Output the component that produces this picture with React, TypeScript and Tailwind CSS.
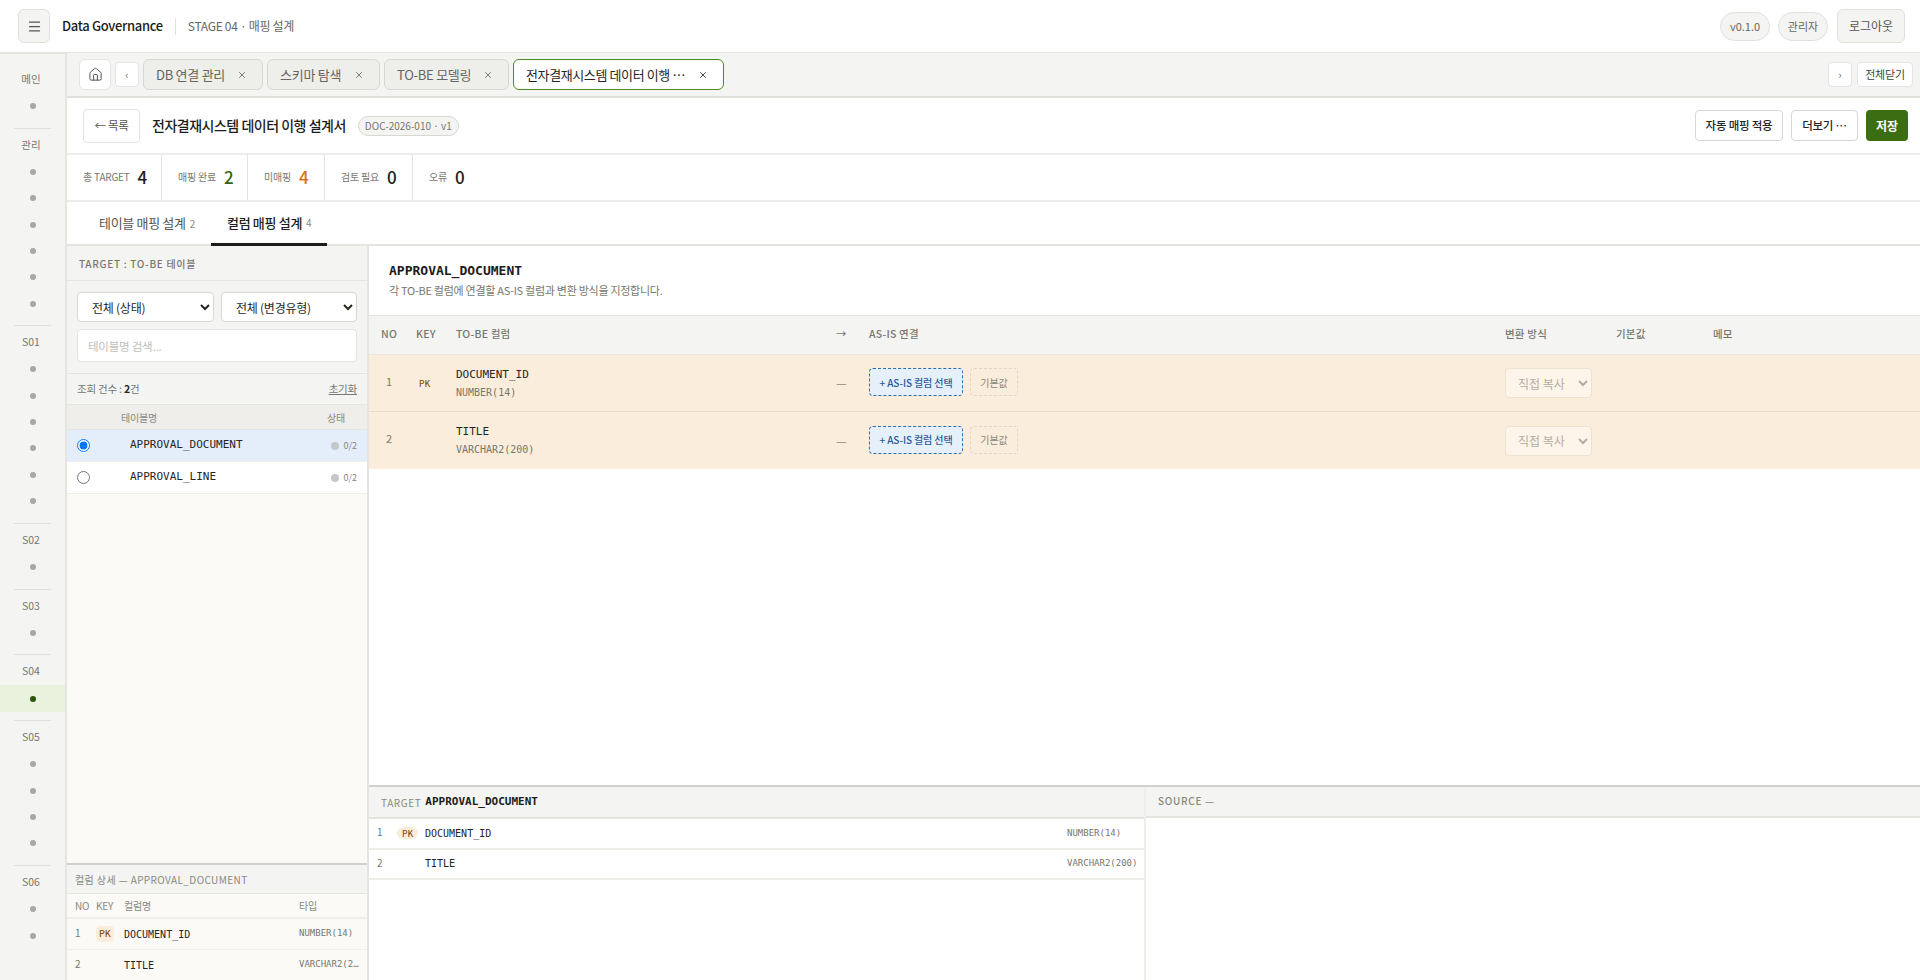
import { Home, Menu, X } from "lucide-react";

const sans = "font-['Noto_Sans_CJK_KR','Noto_Sans',sans-serif]";
const mono = "font-['DejaVu_Sans_Mono','Noto_Sans_CJK_KR',monospace]";

const navGroups = [
  { label: "메인", count: 1 },
  { label: "관리", count: 6 },
  { label: "S01", count: 6 },
  { label: "S02", count: 1 },
  { label: "S03", count: 1 },
  { label: "S04", count: 1, active: true },
  { label: "S05", count: 4 },
  { label: "S06", count: 2 },
];

const tabs = [
  { label: "DB 연결 관리", width: "w-[120px]" },
  { label: "스키마 탐색", width: "w-[113px]" },
  { label: "TO-BE 모델링", width: "w-[125px]" },
];

const kpis = [
  { label: "총 TARGET", value: "4", color: "text-[#1c1c1a]", width: "w-[95px]" },
  { label: "매핑 완료", value: "2", color: "text-[#33640f]", width: "w-[86px]" },
  { label: "미매핑", value: "4", color: "text-[#d9750f]", width: "w-[77px]" },
  { label: "검토 필요", value: "0", color: "text-[#1c1c1a]", width: "w-[88px]" },
  { label: "오류", value: "0", color: "text-[#1c1c1a]", width: "" },
];

const columns = [
  { no: 1, key: "PK", name: "DOCUMENT_ID", type: "NUMBER(14)" },
  { no: 2, key: "", name: "TITLE", type: "VARCHAR2(200)" },
];

function Sidebar() {
  return (
    <aside className="flex w-[67px] shrink-0 flex-col border-r-2 border-[#e4e4e0] bg-[#f4f4f2] pt-[9px]">
      {navGroups.map((group, i) => (
        <div key={group.label} className={i === 0 ? "pt-2" : "mt-[8.6px] pt-2"}>
          {i > 0 && <div className="mx-3.5 -mt-2 mb-2 h-px bg-[#e0e0dc]" />}
          <div className="mb-1.5 h-4 pr-[3px] text-center text-[10.5px] leading-4 text-[#77776f]">{group.label}</div>
          {Array.from({ length: group.count }).map((_, n) => (
            <div key={n} className={`flex h-[26.3px] items-center justify-center pl-[1px] ${group.active ? "bg-[#e8f2dc]" : ""}`}>
              <span className={`h-[6px] w-[6px] rounded-full ${group.active ? "bg-[#2b540b]" : "bg-[#a8a8a4]"}`} />
            </div>
          ))}
        </div>
      ))}
    </aside>
  );
}

function TabBar() {
  return (
    <div className="flex h-[45px] shrink-0 items-center border-b-2 border-[#e0e0dc] bg-[#f4f4f2] pl-3 pr-[7px]">
      <button className="flex h-[31px] w-[32px] items-center justify-center rounded-md border border-[#e4e4e0] bg-white text-[#55554f]">
        <Home size={15} strokeWidth={1.6} />
      </button>
      <button className="ml-1 mr-1 flex h-[25px] w-[24px] items-center justify-center rounded border border-[#e4e4e0] bg-white text-[11px] text-[#66665f]">‹</button>
      <div className="flex gap-1">
        {tabs.map((tab) => (
          <div key={tab.label} className={`flex h-[31px] items-center justify-between rounded-md border border-[#d8d8d2] bg-[#eeeeea] pl-3 pr-3 text-[13px] tracking-[-0.02em] text-[#66665f] ${tab.width}`}>
            <span>{tab.label}</span>
            <X size={10} className="mr-[3px]" />
          </div>
        ))}
        <div className="flex h-[31px] w-[211px] items-center justify-between rounded-md border border-[#4f8a1f] bg-white pl-3 pr-3 text-[13px] tracking-[-0.03em] text-[#26261f]">
          <span className="truncate">전자결재시스템 데이터 이행 ⋯</span>
          <X size={10} className="mr-[3px] shrink-0" />
        </div>
      </div>
      <div className="ml-auto flex items-center gap-[5px]">
        <button className="flex h-[25px] w-[24px] items-center justify-center rounded border border-[#e4e4e0] bg-white text-[11px] text-[#66665f]">›</button>
        <button className="h-[25px] w-[56px] rounded border border-[#e4e4e0] bg-white text-[11px] tracking-[-0.02em] text-[#44443e]">전체닫기</button>
      </div>
    </div>
  );
}

function DocHeader() {
  return (
    <div className="flex h-[57px] shrink-0 items-center border-b-2 border-[#ececea] bg-white pl-4 pr-3">
      <button className="h-[34px] w-[57px] rounded border border-[#e4e4e0] bg-white text-[11.5px] tracking-[-0.03em] text-[#55554f]">← 목록</button>
      <h1 className="ml-3 text-[14px] font-medium tracking-[-0.035em] text-[#1c1c1a]">전자결재시스템 데이터 이행 설계서</h1>
      <span className="ml-3 flex h-[20px] w-[101px] items-center justify-center rounded-full border border-[#d8d8d2] bg-[#f4f4f2] text-[10px] text-[#77776f]">DOC-2026-010 · v1</span>
      <div className="ml-auto flex gap-2">
        <button className="h-[31px] w-[88px] rounded border border-[#d8d8d2] bg-white text-[11.5px] font-medium tracking-[-0.02em] text-[#26261f]">자동 매핑 적용</button>
        <button className="h-[31px] w-[67px] rounded border border-[#d8d8d2] bg-white text-[11.5px] font-medium tracking-[-0.02em] text-[#26261f]">더보기 ⋯</button>
        <button className="h-[31px] w-[42px] rounded bg-[#3b6d11] text-[12px] font-semibold text-white">저장</button>
      </div>
    </div>
  );
}

function KpiRow() {
  return (
    <div className="flex h-[47px] shrink-0 border-b-2 border-[#ececea] bg-white">
      {kpis.map((kpi) => (
        <div key={kpi.label} className={`flex items-center gap-2 border-r border-[#e4e4e0] pl-4 last:border-r-0 ${kpi.width}`}>
          <span className="-mt-[2px] text-[10px] tracking-[-0.02em] text-[#77776f]">{kpi.label}</span>
          <span className={`-mt-[2px] text-[17px] font-medium ${kpi.color}`}>{kpi.value}</span>
        </div>
      ))}
    </div>
  );
}

function PageTabs() {
  return (
    <div className="flex h-[44px] shrink-0 border-b-2 border-[#e4e4e0] bg-white pl-[16px]">
      <div className="flex w-[128px] items-center pl-4 text-[13px] tracking-[-0.025em] text-[#55554f]">
        테이블 매핑 설계<span className="ml-1 text-[10px] text-[#88887f]">2</span>
      </div>
      <div className="-mb-[2px] flex w-[116px] items-center border-b-[3px] border-[#1c1c1a] pl-4 text-[13px] font-medium tracking-[-0.025em] text-[#1c1c1a]">
        컬럼 매핑 설계<span className="ml-1 text-[10px] font-normal text-[#88887f]">4</span>
      </div>
    </div>
  );
}

function TablePanel() {
  return (
    <div className="flex w-[302px] shrink-0 flex-col border-r-2 border-[#e4e4e0] bg-[#fbfaf7]">
      <div className="flex h-[35px] shrink-0 items-center border-b border-[#e4e4e0] bg-[#f4f4f2] pl-3 text-[10px] font-medium tracking-[0.07em] text-[#77776f]">
        TARGET : TO-BE 테이블
      </div>
      <div className="flex shrink-0 flex-col gap-[7px] border-b border-[#e4e4e0] bg-[#f4f4f2] px-[10px] py-[11px]">
        <div className="flex gap-[7px]">
          <select className="h-[30px] w-[137px] rounded border border-[#d8d8d2] bg-white pl-2.5 text-[12px] tracking-[-0.02em] text-[#26261f]">
            <option>전체 (상태)</option>
          </select>
          <select className="h-[30px] w-[136px] rounded border border-[#d8d8d2] bg-white pl-2.5 text-[12px] tracking-[-0.02em] text-[#26261f]">
            <option>전체 (변경유형)</option>
          </select>
        </div>
        <input placeholder="테이블명 검색..." className="h-[33px] w-full rounded border border-[#e4e4e0] bg-white px-2.5 text-[11.5px] tracking-[-0.02em] placeholder:text-[#c0c0ba]" />
      </div>
      <div className="flex h-[30px] shrink-0 items-center justify-between bg-[#f4f4f2] px-[10px] text-[10.5px] tracking-[-0.02em] text-[#77776f]">
        <span>
          조회 건수 : <b className="font-semibold text-[#26261f]">2</b>건
        </span>
        <span className="underline">초기화</span>
      </div>
      <div className="flex h-[26px] shrink-0 items-center border-y border-[#e4e4e0] bg-[#efeeea] text-[10px] tracking-[-0.02em] text-[#88887f]">
        <span className="ml-[54px]">테이블명</span>
        <span className="ml-auto mr-[22px]">상태</span>
      </div>
      {["APPROVAL_DOCUMENT", "APPROVAL_LINE"].map((name, i) => (
        <label key={name} className={`flex h-[32px] shrink-0 items-center border-b border-[#eeeeea] pl-[10px] pr-[10px] ${i === 0 ? "bg-[#e4eefa]" : "bg-white"}`}>
          <input type="radio" name="target-table" defaultChecked={i === 0} className="m-0 h-[13px] w-[13px]" />
          <span className={`ml-[40px] text-[11px] text-[#26261f] ${mono}`}>{name}</span>
          <span className="ml-auto flex items-center gap-1 text-[9px] text-[#88887f]">
            <span className="h-2 w-2 rounded-full bg-[#c4c8cc]" />0/2
          </span>
        </label>
      ))}
      <div className="mt-auto h-[117px] shrink-0 overflow-hidden border-t-2 border-[#d0d0cc] bg-[#fbfaf7]">
        <div className="flex h-[29px] items-center border-b border-[#e4e4e0] bg-[#f4f4f2] pl-2 text-[10px] tracking-[0.04em] text-[#88887f]">
          컬럼 상세 — APPROVAL_DOCUMENT
        </div>
        <div className="grid h-[25px] grid-cols-[21px_28px_175px_1fr] items-center border-b-2 border-[#eeeeea] pl-2 text-[10px] tracking-[-0.02em] text-[#88887f]">
          <span>NO</span>
          <span>KEY</span>
          <span>컬럼명</span>
          <span>타입</span>
        </div>
        {columns.map((col) => (
          <div key={col.no} className="grid h-[31px] grid-cols-[21px_28px_175px_1fr] items-center border-b border-[#eeeeea] pl-2 text-[#77776f]">
            <span className="-mt-[3px] text-[10px]">{col.no}</span>
            <span className="flex items-center">
              {col.key && <span className="rounded bg-[#faeddb] px-[3px] text-[9px] font-medium leading-[16px] text-[#8a4f10]">{col.key}</span>}
            </span>
            <span className={`text-[10px] text-[#26261f] ${mono}`}>{col.name}</span>
            <span className={`truncate pr-1 text-[9px] ${mono}`}>{col.type}</span>
          </div>
        ))}
      </div>
    </div>
  );
}

const colGrid = "grid grid-cols-[35px_40px_380px_33px_636px_111px_97px_1fr] items-center pl-3";

function MappingTable() {
  return (
    <div className="min-h-0 flex-1 bg-white">
      <div className="flex h-[69px] flex-col justify-center pb-[2px] pl-5">
        <div className={`text-[13px] font-bold text-[#1c1c1a] ${mono}`}>APPROVAL_DOCUMENT</div>
        <div className="mt-[1px] text-[11px] tracking-[-0.025em] text-[#77776f]">각 TO-BE 컬럼에 연결할 AS-IS 컬럼과 변환 방식을 지정합니다.</div>
      </div>
      <div className={`${colGrid} h-[40px] border-y border-[#e4e4e0] bg-[#f4f4f2] text-[10.5px] font-medium tracking-[0.02em] text-[#77776f]`}>
        <span className="-mt-[3px]">NO</span>
        <span className="-mt-[3px]">KEY</span>
        <span className="-mt-[3px]">TO-BE 컬럼</span>
        <span className="-mt-[3px]">→</span>
        <span className="-mt-[3px]">AS-IS 연결</span>
        <span className="-mt-[3px]">변환 방식</span>
        <span className="-mt-[3px]">기본값</span>
        <span className="-mt-[3px]">메모</span>
      </div>
      {columns.map((col) => (
        <div key={col.no} className={`${colGrid} h-[57px] border-b border-[#e8dcca] bg-[#faeddb] last:border-b-0`}>
          <span className="-mt-[4px] pl-[5px] text-[11px] text-[#77776f]">{col.no}</span>
          <span className="pl-[3px] text-[8.5px] font-medium text-[#8a4f10]">{col.key}</span>
          <div className="pt-[1px]">
            <div className={`text-[11px] leading-[18px] text-[#26261f] ${mono}`}>{col.name}</div>
            <div className={`text-[10px] leading-[18px] text-[#77776f] ${mono}`}>{col.type}</div>
          </div>
          <span className="text-[12px] text-[#88887f]">—</span>
          <div className="-mt-[2px] flex gap-[7px]">
            <button className="h-[28px] w-[94px] rounded border border-dashed border-[#2f6cb0] bg-[#e5f0fb] text-[10px] font-medium tracking-[-0.01em] text-[#1f5a9c]">+ AS-IS 컬럼 선택</button>
            <button className="h-[28px] w-[48px] rounded border border-dashed border-[#e0d6c6] text-[10px] text-[#88887f]">기본값</button>
          </div>
          <select disabled className="h-[30px] w-[87px] rounded border border-[#ece2d2] bg-[#fdf5ea] pl-2 text-[12px] text-[#b5ada2] opacity-100">
            <option>직접 복사</option>
          </select>
          <span />
          <span />
        </div>
      ))}
    </div>
  );
}

function CompareFooter() {
  return (
    <div className="flex h-[195px] shrink-0 border-t-2 border-[#d0d0cc] bg-white">
      <div className="w-[777px] shrink-0 border-r-2 border-[#eeeeea]">
        <div className="flex h-[32px] items-center gap-1 border-b-2 border-[#e4e4e0] bg-[#f4f4f2] pl-3 text-[10px] tracking-[0.06em] text-[#88887f]">
          TARGET <b className={`text-[11px] font-bold tracking-normal text-[#1c1c1a] ${mono}`}>APPROVAL_DOCUMENT</b>
        </div>
        {columns.map((col) => (
          <div key={col.no} className="flex h-[30.5px] items-center border-b-2 border-[#eeeeea] pl-2 text-[#77776f]">
            <span className="-mt-[3px] w-[20px] text-[10px]">{col.no}</span>
            <span className="flex w-[28px] items-center">
              {col.key && <span className="rounded-full bg-[#faeddb] px-[5px] text-[8.5px] font-medium leading-[12px] text-[#8a4f10]">{col.key}</span>}
            </span>
            <span className={`text-[10px] text-[#26261f] ${mono}`}>{col.name}</span>
            <span className={`ml-auto w-[77px] text-[9px] ${mono}`}>{col.type}</span>
          </div>
        ))}
      </div>
      <div className="flex-1">
        <div className="flex h-[31px] items-center border-b-2 border-[#e4e4e0] bg-[#f4f4f2] pb-[2px] pl-3 text-[10px] font-medium tracking-[0.07em] text-[#88887f]">
          SOURCE —
        </div>
      </div>
    </div>
  );
}

export default function App() {
  return (
    <div className={`flex h-screen flex-col overflow-hidden bg-white ${sans}`}>
      <header className="flex h-[54px] shrink-0 items-center border-b-2 border-[#e4e4e0] bg-white pl-[18px] pr-[15px]">
        <button className="flex h-[34px] w-[32px] items-center justify-center rounded-md border border-[#e0e0dc] bg-[#f4f4f2] text-[#55554f]">
          <Menu size={15} />
        </button>
        <span className="ml-3 text-[13px] font-medium tracking-[-0.025em] text-[#1c1c1a]">Data Governance</span>
        <span className="ml-3 h-[17px] w-px bg-[#e0e0dc]" />
        <span className="ml-3 text-[12px] tracking-[-0.025em] text-[#66665f]">STAGE 04 · 매핑 설계</span>
        <div className="ml-auto flex items-center gap-2">
          <span className="flex h-[29px] w-[50px] items-center justify-center rounded-full border border-[#e0e0dc] bg-[#f4f4f2] text-[11px] text-[#66665f]">v0.1.0</span>
          <span className="flex h-[29px] w-[50px] items-center justify-center rounded-full border border-[#e0e0dc] bg-[#f4f4f2] text-[11px] text-[#66665f]">관리자</span>
          <button className="ml-px h-[34px] w-[68px] rounded-md border border-[#e0e0dc] bg-[#f4f4f2] text-[12px] text-[#55554f]">로그아웃</button>
        </div>
      </header>
      <div className="flex min-h-0 flex-1">
        <Sidebar />
        <main className="flex min-w-0 flex-1 flex-col">
          <div className="flex h-[45px] shrink-0 -mt-px flex-col">
            <TabBar />
          </div>
          <DocHeader />
          <KpiRow />
          <PageTabs />
          <div className="flex min-h-0 flex-1">
            <TablePanel />
            <div className="flex min-w-0 flex-1 flex-col">
              <MappingTable />
              <CompareFooter />
            </div>
          </div>
        </main>
      </div>
    </div>
  );
}
